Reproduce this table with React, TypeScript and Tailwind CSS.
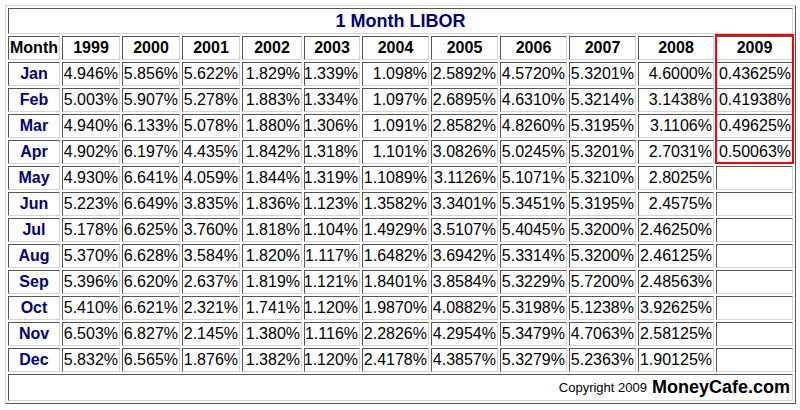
import React from "react";

const years = ["1999","2000","2001","2002","2003","2004","2005","2006","2007","2008","2009"];
const rows: [string, string[]][] = [
  ["Jan", ["4.946%","5.856%","5.622%","1.829%","1.339%","1.098%","2.5892%","4.5720%","5.3201%","4.6000%","0.43625%"]],
  ["Feb", ["5.003%","5.907%","5.278%","1.883%","1.334%","1.097%","2.6895%","4.6310%","5.3214%","3.1438%","0.41938%"]],
  ["Mar", ["4.940%","6.133%","5.078%","1.880%","1.306%","1.091%","2.8582%","4.8260%","5.3195%","3.1106%","0.49625%"]],
  ["Apr", ["4.902%","6.197%","4.435%","1.842%","1.318%","1.101%","3.0826%","5.0245%","5.3201%","2.7031%","0.50063%"]],
  ["May", ["4.930%","6.641%","4.059%","1.844%","1.319%","1.1089%","3.1126%","5.1071%","5.3210%","2.8025%",""]],
  ["Jun", ["5.223%","6.649%","3.835%","1.836%","1.123%","1.3582%","3.3401%","5.3451%","5.3195%","2.4575%",""]],
  ["Jul", ["5.178%","6.625%","3.760%","1.818%","1.104%","1.4929%","3.5107%","5.4045%","5.3200%","2.46250%",""]],
  ["Aug", ["5.370%","6.628%","3.584%","1.820%","1.117%","1.6482%","3.6942%","5.3314%","5.3200%","2.46125%",""]],
  ["Sep", ["5.396%","6.620%","2.637%","1.819%","1.121%","1.8401%","3.8584%","5.3229%","5.7200%","2.48563%",""]],
  ["Oct", ["5.410%","6.621%","2.321%","1.741%","1.120%","1.9870%","4.0882%","5.3198%","5.1238%","3.92625%",""]],
  ["Nov", ["6.503%","6.827%","2.145%","1.380%","1.116%","2.2826%","4.2954%","5.3479%","4.7063%","2.58125%",""]],
  ["Dec", ["5.832%","6.565%","1.876%","1.382%","1.120%","2.4178%","4.3857%","5.3279%","5.2363%","1.90125%",""]],
];

const cell = "border border-t-[#555555] border-l-[#555555] border-b-[#d4d4d4] border-r-[#d4d4d4] bg-white";

export default function App() {
  return (
    <div className="w-[800px] h-[410px] bg-white relative" style={{ fontFamily: '"Liberation Sans", Arial, sans-serif' }}>
      <div className="absolute left-[5px] top-[5px] w-[791px] border border-t-[#d4d4d4] border-l-[#d4d4d4] border-b-[#555555] border-r-[#555555] p-[2px]">
        <div className="grid grid-cols-[52px_58px_58px_58px_60px_56px_67px_67px_67px_67px_76px_77px] gap-[2px]">
          <div className={`${cell} col-span-12 h-[26px] flex items-center justify-center text-[18px] font-bold text-[#000080]`}>
            1 Month LIBOR
          </div>
          <div className={`${cell} h-[24px] flex items-center justify-center text-[16px] font-bold text-black`}>Month</div>
          {years.map((y) => (
            <div key={y} className={`${cell} h-[24px] flex items-center justify-center text-[16px] font-bold text-black`}>{y}</div>
          ))}
          {rows.map(([m, vals]) => (
            <React.Fragment key={m}>
              <div className={`${cell} h-[24px] flex items-center justify-center text-[16px] font-bold text-[#000080]`}>{m}</div>
              {vals.map((v, i) => (
                <div key={i} className={`${cell} h-[24px] flex items-center justify-end pr-[1px] text-[16px] text-black whitespace-nowrap`}>{v}</div>
              ))}
            </React.Fragment>
          ))}
          <div className={`${cell} col-span-12 h-[27px] flex items-center justify-end pr-[2px] text-black whitespace-nowrap`}>
            <span className="text-[13px]">Copyright 2009</span>
            <span className="text-[18px] font-bold ml-[5px]">MoneyCafe.com</span>
          </div>
        </div>
      </div>
      <div className="absolute left-[715px] top-[34px] w-[79px] h-[130px] border-2 border-[#ff0000] pointer-events-none" />
    </div>
  );
}
